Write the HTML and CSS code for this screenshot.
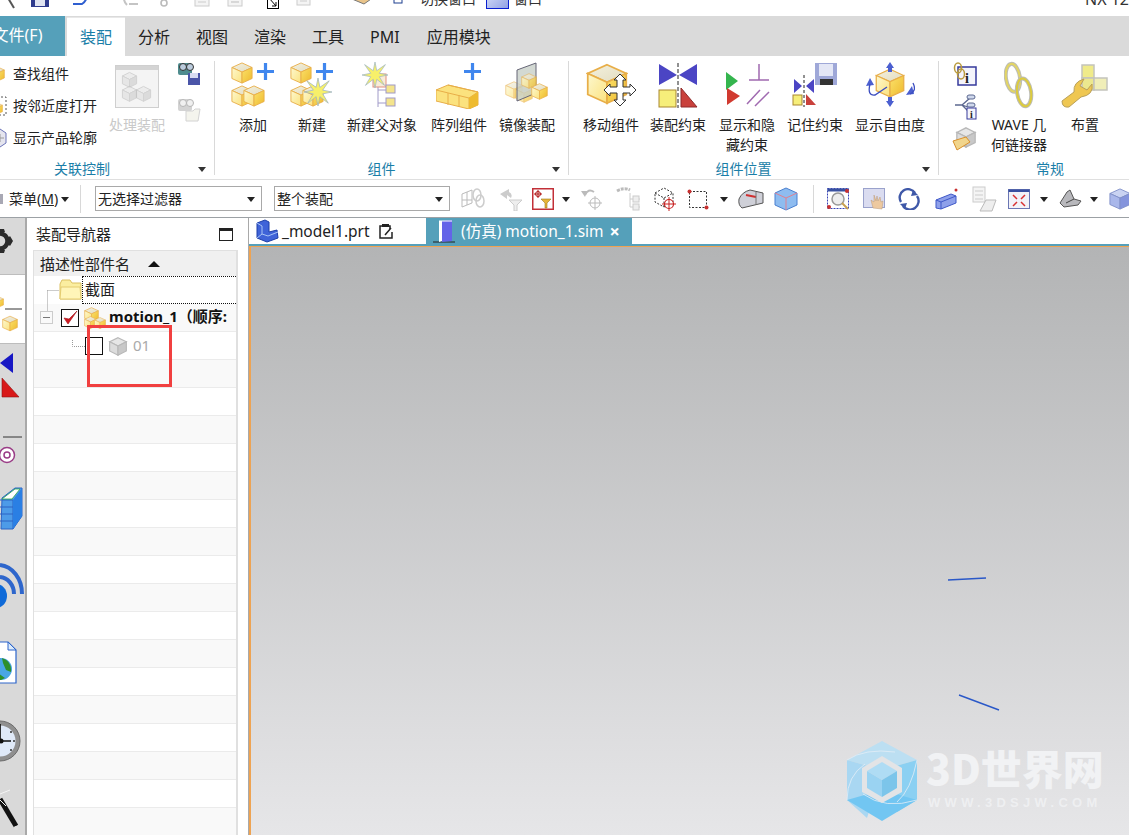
FILE: index.html
```html
<!DOCTYPE html>
<html lang="zh">
<head>
<meta charset="utf-8">
<title>NX 12</title>
<link rel="stylesheet" href="styles.css">
</head>
<body>
<svg class="defs" width="0" height="0" aria-hidden="true">
  <defs>
    <linearGradient id="gTop" x1="0" y1="0" x2="1" y2="1"><stop offset="0" stop-color="#f4f1de"/><stop offset="1" stop-color="#e2dcc0"/></linearGradient>
    <linearGradient id="gLeft" x1="0" y1="0" x2="1" y2="1"><stop offset="0" stop-color="#fdf8cf"/><stop offset="1" stop-color="#fbe27e"/></linearGradient>
    <linearGradient id="gRight" x1="0" y1="0" x2="1" y2="1"><stop offset="0" stop-color="#fbe26b"/><stop offset="1" stop-color="#eeb92e"/></linearGradient>
    <linearGradient id="gBlue" x1="0" y1="0" x2="1" y2="1"><stop offset="0" stop-color="#dfe6fa"/><stop offset="1" stop-color="#8f9fe4"/></linearGradient>
    <symbol id="cube" viewBox="0 0 24 24">
      <path d="M12 1 23 6 12 11 1 6Z" fill="url(#gTop)" stroke="#e8ae48"/>
      <path d="M1 6 12 11V23L1 18Z" fill="url(#gLeft)" stroke="#e8ae48"/>
      <path d="M23 6 12 11V23L23 18Z" fill="url(#gRight)" stroke="#e8ae48"/>
    </symbol>
    <symbol id="gcube" viewBox="0 0 24 24">
      <path d="M12 2 22 7 12 12 2 7Z" fill="#e6e6e6" stroke="#b8b8b8" stroke-width="1.4"/>
      <path d="M2 7 12 12V23L2 18Z" fill="#dcdcdc" stroke="#b8b8b8" stroke-width="1.4"/>
      <path d="M22 7 12 12V23L22 18Z" fill="#c8c8c8" stroke="#b8b8b8" stroke-width="1.4"/>
    </symbol>
    <symbol id="bcube" viewBox="0 0 24 24">
      <path d="M12 1 23 6 12 11 1 6Z" fill="#c9d3f2" stroke="#7f8fc8"/>
      <path d="M1 6 12 11V23L1 18Z" fill="#a9b7ea" stroke="#7f8fc8"/>
      <path d="M23 6 12 11V23L23 18Z" fill="#8494dc" stroke="#7f8fc8"/>
    </symbol>
    <symbol id="plus" viewBox="0 0 18 18"><path d="M9 0V18M0 9H18" stroke="#3f86ee" stroke-width="3.4"/></symbol>
    <symbol id="star" viewBox="0 0 30 30">
      <path d="M15 0 17 10 27 3 20 13 30 15 20 17 26 27 17 20 15 30 13 20 4 27 10 17 0 15 10 13 3 3 13 10Z" fill="#f7f06a" stroke="#9db4c4" stroke-width=".8"/>
    </symbol>
  </defs>
</svg>

<div class="quick">
  <div class="quick-row">
    <svg class="q q1" width="9" height="20"><path d="M1 9 7 19" stroke="#555" stroke-width="2"/></svg>
    <svg class="q q2" width="20" height="20"><rect x="1" y="0" width="18" height="18" fill="#2e3a8c"/><rect x="5" y="11" width="10" height="6" fill="#dfe3f0"/></svg>
    <svg class="q q3" width="20" height="20"><path d="M2 15H11Q16 12 17 3" fill="none" stroke="#2f5fd0" stroke-width="2"/></svg>
    <svg class="q q4" width="20" height="20"><path d="M6 4Q3 11 8 16M10 15H19" fill="none" stroke="#c4c4c4" stroke-width="2"/></svg>
    <svg class="q q5" width="16" height="20"><circle cx="8" cy="14" r="3" fill="none" stroke="#bbb" stroke-width="1.6"/><path d="M2 3 8 12 14 3" fill="none" stroke="#ccc"/></svg>
    <svg class="q q6" width="24" height="20"><rect x="8" y="0" width="14" height="17" fill="#f4f4f4" stroke="#ccc"/><path d="M11 10H19M11 13H19" stroke="#ccc"/></svg>
    <svg class="q q7" width="22" height="20"><rect x="6" y="0" width="14" height="17" fill="#f4f4f4" stroke="#ccc"/><path d="M9 10H17M9 13H17" stroke="#bbb"/></svg>
    <svg class="q q8" width="22" height="20"><circle cx="7" cy="4" r="6" fill="none" stroke="#d02020" stroke-width="1.6"/><rect x="10.500" y="6.500" width="11" height="13" fill="#fff" stroke="#000"/><path d="M12 9 19 17M15 17H19V13" fill="none" stroke="#000"/></svg>
    <svg class="q q9" width="24" height="20"><rect x="8" y="0" width="13" height="16" fill="#f4f4f4" stroke="#ccc"/><path d="M11 8H18M11 12H18" stroke="#ccc"/></svg>
    <svg class="q q10" width="26" height="20"><path d="M2 10 14 15 24 8 18 4 6 4Z" fill="#e9c48a" stroke="#777"/></svg>
    <svg class="q q11" width="10" height="20"><rect x="1" y="6" width="8" height="8" fill="#fff" stroke="#1c3f8f"/></svg>
    <span class="quick-text quick-switch">切换窗口</span>
    <svg class="q q12" width="23" height="20"><rect x=".5" y=".5" width="22" height="19" fill="url(#gBlue)" stroke="#0a1fd0"/></svg>
    <span class="quick-text quick-win">窗口</span>
    <span class="quick-text quick-nx">NX 12</span>
  </div>
</div>

<nav class="tabs">
  <span class="file-tab">文件(F)</span>
  <span class="tab tab-on">装配</span>
  <span class="tab">分析</span>
  <span class="tab">视图</span>
  <span class="tab">渲染</span>
  <span class="tab">工具</span>
  <span class="tab">PMI</span>
  <span class="tab">应用模块</span>
</nav>

<section class="ribbon">
  <div class="group g1">
    <div class="g-body g1-body">
      <ul class="small-list">
        <li><svg class="sm-ic" width="22" height="20"><use href="#cube" x="-2" y="2" width="16" height="16"/></svg>查找组件</li>
        <li><svg class="sm-ic" width="22" height="20"><rect x="2" y="1" width="13" height="18" fill="none" stroke="#555" stroke-dasharray="2 2"/><use href="#cube" x="-1" y="6" width="13" height="13"/></svg>按邻近度打开</li>
        <li><svg class="sm-ic" width="22" height="20"><path d="M2 5 9 1 15 5V15L9 19 2 15Z" fill="#e5e5ee" stroke="#6a72b8"/><path d="M9 6V14M5 10H13" stroke="#999"/></svg>显示产品轮廓</li>
      </ul>
      <div class="rb rb-off rb-proc">
        <svg class="ic" width="44" height="44">
          <rect x=".5" y="1.500" width="43" height="42" fill="#f4f4f4" stroke="#cfcfcf"/>
          <rect x="1" y="2" width="42" height="4" fill="#d4d4d4"/>
          <use href="#gcube" x="6" y="7" width="17" height="17" opacity=".55"/>
          <use href="#gcube" x="6" y="21" width="17" height="17" opacity=".55"/>
          <use href="#gcube" x="20" y="21" width="17" height="17" opacity=".55"/>
        </svg>
        <span>处理装配</span>
      </div>
      <div class="side-icons">
        <svg width="24" height="26"><rect x="1" y="2" width="14" height="12" rx="2" fill="#4f8c8e"/><circle cx="6" cy="6" r="3.500" fill="#bcd" stroke="#333"/><circle cx="13" cy="6" r="3.500" fill="#bcd" stroke="#333"/><rect x="11" y="12" width="12" height="12" fill="#4a55a8"/><rect x="13" y="12" width="8" height="5" fill="#d8dcf2"/></svg>
        <svg width="24" height="26" class="faded"><rect x="1" y="2" width="14" height="12" rx="2" fill="#ccc"/><circle cx="6" cy="6" r="3.500" fill="#eee" stroke="#aaa"/><circle cx="13" cy="6" r="3.500" fill="#eee" stroke="#aaa"/><path d="M9 14H16L18 12H23L21 24H9Z" fill="#f3f3ea" stroke="#ccc"/></svg>
      </div>
    </div>
    <div class="g-foot"><span class="g-label">关联控制</span><i class="more"></i></div>
  </div>

  <div class="group g2">
    <div class="g-body big-grid g2-grid">
      <div class="rb">
        <svg class="ic" width="44" height="48">
          <use href="#cube" x="0" y="1" width="22" height="22"/><use href="#cube" x="0" y="24" width="22" height="22"/><use href="#cube" x="12" y="24" width="22" height="22"/>
          <use href="#plus" x="26" y="2" width="17" height="17"/>
        </svg>
        <span>添加</span>
      </div>
      <div class="rb">
        <svg class="ic" width="44" height="48">
          <use href="#cube" x="0" y="1" width="22" height="22"/><use href="#cube" x="0" y="24" width="22" height="22"/><use href="#cube" x="12" y="24" width="22" height="22"/>
          <use href="#star" x="14" y="17" width="28" height="28"/>
          <use href="#plus" x="26" y="2" width="17" height="17"/>
        </svg>
        <span>新建</span>
      </div>
      <div class="rb">
        <svg class="ic" width="44" height="48">
          <path d="M18 16V46M18 29H26M18 42H26" stroke="#a09ac8" fill="none"/>
          <rect x="13" y="13" width="13" height="13" fill="#f8ecd8" stroke="#e09080"/>
          <rect x="26" y="24" width="9" height="8" fill="#f4e48c" stroke="#a09ac8"/>
          <rect x="26" y="37" width="9" height="8" fill="#f4e48c" stroke="#a09ac8"/>
          <use href="#star" x="2" y="1" width="26" height="26"/>
        </svg>
        <span>新建父对象</span>
      </div>
      <div class="rb">
        <svg class="ic" width="46" height="48">
          <path d="M0 29 12 24 42 31 42 44 33 48 0 40Z" fill="#fbe27e" stroke="#e8ae48"/>
          <path d="M0 29 33 37V48M12 32V44M23 34V46M12 24 42 31 33 37" fill="none" stroke="#e8ae48"/>
          <path d="M33 37 42 31V44L33 48Z" fill="#eebb30"/>
          <use href="#plus" x="28" y="2" width="17" height="17"/>
        </svg>
        <span>阵列组件</span>
      </div>
      <div class="rb">
        <svg class="ic" width="44" height="48">
          <use href="#cube" x="0" y="20" width="18" height="18" opacity=".7"/>
          <use href="#cube" x="10" y="24" width="18" height="18" opacity=".7"/>
          <path d="M12 9 31 2V32L12 40Z" fill="#c4ccc4" fill-opacity=".75" stroke="#667"/>
          <use href="#cube" x="16" y="12" width="16" height="16" opacity=".8"/>
          <use href="#cube" x="26" y="22" width="17" height="17"/>
        </svg>
        <span>镜像装配</span>
      </div>
    </div>
    <div class="g-foot"><span class="g-label">组件</span><i class="more"></i></div>
  </div>

  <div class="group g3">
    <div class="g-body big-grid g3-grid">
      <div class="rb">
        <svg class="ic" width="50" height="48">
          <use href="#cube" x="0" y="0" width="42" height="46"/>
          <path d="M35 18 41 24H38V31H45V28L51 34 45 40V37H38V44H41L35 50 29 44H32V37H25V40L19 34 25 28V31H32V24H29Z" transform="translate(-1 -5)" fill="#fff" stroke="#333"/>
        </svg>
        <span>移动组件</span>
      </div>
      <div class="rb">
        <svg class="ic" width="42" height="48">
          <path d="M2 3 20 14 2 24Z M40 3 22 14 40 24Z" fill="#4b45c4"/>
          <path d="M21 2V47" stroke="#222" stroke-dasharray="4 2"/>
          <rect x="2" y="29" width="17" height="17" fill="#f6ee7a" stroke="#a98730"/>
          <path d="M24 27 40 46H24Z" fill="#c9413c" stroke="#8f2b2b"/>
        </svg>
        <span>装配约束</span>
      </div>
      <div class="rb">
        <svg class="ic" width="48" height="48">
          <path d="M3 11 15 20 3 29Z" fill="#34b54e"/>
          <path d="M4 27 17 35 4 44Z" fill="#d13a30"/>
          <path d="M26 19H46M36 3V19M24 43 37 29M32 45 46 31" stroke="#a06ab0" stroke-width="1.500" fill="none"/>
        </svg>
        <span>显示和隐<br>藏约束</span>
      </div>
      <div class="rb">
        <svg class="ic" width="46" height="48">
          <rect x="23" y="2" width="22" height="22" fill="#9fa8d8"/><rect x="27" y="3" width="14" height="12" fill="#e4e7f6"/><rect x="28" y="18" width="13" height="6" fill="#333"/>
          <path d="M2 18 10 25 2 32ZM22 18 14 25 22 32Z" fill="#4b45c4"/>
          <path d="M12 14V46" stroke="#222" stroke-dasharray="3 2"/>
          <rect x="1" y="34" width="9" height="10" fill="#f6ee7a" stroke="#a98730"/>
          <path d="M14 33 24 44H14Z" fill="#c9413c"/>
        </svg>
        <span>记住约束</span>
      </div>
      <div class="rb">
        <svg class="ic" width="50" height="48">
          <use href="#cube" x="10" y="7" width="30" height="30"/>
          <path d="M25 1 29 7H27V11H23V7H21Z M25 46 21 40H23V36H27V40H29Z" fill="#4b5fd0"/>
          <path d="M5 17 1 25 9 24Z M47 25 41 34 49 33Z" fill="#4b5fd0"/>
          <path d="M5 23Q2 35 10 34L22 26M48 22Q52 30 45 33" fill="none" stroke="#3c4ec0" stroke-width="1.300"/>
        </svg>
        <span>显示自由度</span>
      </div>
    </div>
    <div class="g-foot"><span class="g-label">组件位置</span><i class="more"></i></div>
  </div>

  <div class="group g4">
    <div class="g-body g4-body">
      <div class="g4-small">
        <svg width="26" height="26"><rect x="6" y="5" width="18" height="18" fill="#f4f4fb" stroke="#363a9c" stroke-width="1.500"/><text class="info" x="15" y="21">i</text><ellipse cx="6" cy="6" rx="3.500" ry="5" fill="none" stroke="#b99a3c" stroke-width="1.500"/><ellipse cx="9" cy="12" rx="3.500" ry="5" fill="none" stroke="#b99a3c" stroke-width="1.500"/></svg>
        <svg width="26" height="26"><path d="M3 11H10L18 4M10 11 16 13M10 11 18 19" fill="none" stroke="#5c6890" stroke-width="1.300"/><rect x="15" y="1" width="8" height="4" rx="2" fill="#cfd8ec" stroke="#5c6890"/><rect x="15" y="9" width="8" height="4" rx="2" fill="#cfd8ec" stroke="#5c6890"/><rect x="15" y="14" width="9" height="11" fill="#f4f4fb" stroke="#363a9c"/><text class="info info-s" x="19.500" y="24">i</text></svg>
        <svg width="26" height="26"><use href="#gcube" x="3" y="0" width="22" height="22"/><path d="M1 15 14 11 18 16 5 24Z" fill="#f1d58c" stroke="#d9902c"/></svg>
      </div>
      <div class="big-grid g4-grid">
        <div class="rb">
          <svg class="ic" width="30" height="48">
            <g fill="none" transform="rotate(-8 15 24)">
              <ellipse cx="10" cy="16" rx="7" ry="14" stroke="#bdbdb4" stroke-width="4"/>
              <ellipse cx="10" cy="16" rx="7" ry="14" stroke="#e3d564" stroke-width="2"/>
              <ellipse cx="19" cy="32" rx="7" ry="14" stroke="#bdbdb4" stroke-width="4"/>
              <ellipse cx="19" cy="32" rx="7" ry="14" stroke="#dccb3e" stroke-width="2"/>
            </g>
          </svg>
          <span>WAVE 几<br>何链接器</span>
        </div>
        <div class="rb">
          <svg class="ic" width="48" height="48">
            <rect x="21" y="4" width="12" height="13" fill="#f0eb8a" stroke="#c4c4bc" stroke-width="1.500"/>
            <rect x="21" y="17" width="12" height="12" fill="#ece88e" stroke="#c4c4bc" stroke-width="1.500"/>
            <rect x="33" y="17" width="13" height="12" fill="#f0eeb8" stroke="#c4c4bc" stroke-width="1.500"/>
            <path d="M1 40 13 31Q12 21 23 18L19 25 26 29 31 23Q33 34 20 36L8 46Q1 47 1 40Z" fill="#efc752" stroke="#b9a05a"/>
          </svg>
          <span>布置</span>
        </div>
      </div>
    </div>
    <div class="g-foot g4-foot"><span class="g-label">常规</span></div>
  </div>
</section>

<section class="toolbar">
  <div class="tb-menu">
    <svg width="9" height="18"><rect x="-4" y="4" width="7" height="10" fill="#a8a8b4"/></svg>
    <span>菜单(<u>M</u>)</span>
    <i class="more more-dark"></i>
  </div>
  <div class="select sel1"><span>无选择过滤器</span><i class="more more-dark"></i></div>
  <div class="select sel2"><span>整个装配</span><i class="more more-dark"></i></div>
  <div class="tb-grid">
    <svg class="off" width="26" height="24"><path d="M2 7 12 3V16L2 20ZM2 13H12M7 5V18" fill="none" stroke="#bbb"/><ellipse cx="17" cy="8" rx="4" ry="6" fill="none" stroke="#ccc" stroke-width="1.500"/><ellipse cx="20" cy="14" rx="4" ry="6" fill="none" stroke="#ccc" stroke-width="1.500"/></svg>
    <svg class="off" width="24" height="24"><path d="M1 7 10 2V5Q14 7 12 11L8 8V12Z" fill="#ccc"/><path d="M10 13H23L18 18V24H15V18Z" fill="#eee" stroke="#ccc"/></svg>
    <svg width="22" height="22"><rect x=".75" y=".75" width="20.500" height="20.500" fill="#fff" stroke="#c23038" stroke-width="1.500"/><path d="M6 2V10M2 6H10" stroke="#b01818"/><circle cx="6" cy="6" r="2.500" fill="none" stroke="#b01818"/><path d="M9 11H19L15 15V20H13V15Z" fill="#e6b63a" stroke="#a07a20" stroke-width=".6"/></svg>
    <i class="more more-dark"></i>
    <svg class="off" width="24" height="24"><path d="M5 8Q8 1 14 5" fill="none" stroke="#bbb" stroke-width="2"/><path d="M1 4 7 4 5 10Z" fill="#bbb"/><circle cx="15" cy="16" r="5" fill="none" stroke="#bbb"/><path d="M15 9V23M8 16H22" stroke="#bbb"/></svg>
    <svg class="off" width="26" height="24"><path d="M1 4Q8 0 14 3" stroke="#bbb" stroke-width="3" fill="none" stroke-dasharray="3 1"/><path d="M14 6V20M14 12H24M14 20H24" stroke="#ccc"/><rect x="17" y="9" width="6" height="6" fill="#eee" stroke="#ccc"/><rect x="17" y="17" width="6" height="6" fill="#eee" stroke="#ccc"/></svg>
    <svg width="24" height="24"><path d="M2 6 11 1 20 6V15L11 20 2 15ZM2 6 11 11 20 6M11 11V20" fill="none" stroke="#333" stroke-dasharray="2 1.500"/><circle cx="16" cy="17" r="4.500" fill="#fff" stroke="#c82020" stroke-width="1.200"/><path d="M16 10V24M9 17H23" stroke="#c82020"/></svg>
    <svg width="22" height="22"><rect x="2.500" y="3.500" width="17" height="16" fill="none" stroke="#333" stroke-dasharray="2 1.500"/><circle cx="2.500" cy="3.500" r="2" fill="#c83030"/><circle cx="19.500" cy="19.500" r="2" fill="#c83030"/></svg>
    <i class="more more-dark"></i>
    <svg width="26" height="22"><path d="M1 11Q4 4 12 2L25 5V15L4 20Q0 17 1 11Z" fill="#cfd0d8" stroke="#555"/><path d="M8 7 18 9" stroke="#d03030" stroke-width="2"/><path d="M18 4V17" stroke="#777"/></svg>
    <svg width="24" height="24"><path d="M12 1 23 6V18L12 23 1 18V6Z" fill="#8ebcf0" stroke="#4a80d0"/><path d="M1 6 12 11 23 6M12 11V23" fill="none" stroke="#e08090"/></svg>
    <i class="tb-sep"></i>
    <svg width="24" height="22"><rect x=".5" y=".5" width="21" height="20" fill="#fff" stroke="#3844b8" stroke-dasharray="2 1"/><rect x=".5" y=".5" width="21" height="3" fill="#3850a0"/><circle cx="11" cy="11" r="6" fill="#eee" stroke="#999" stroke-width="1.500"/><path d="M15 15 21 21" stroke="#c9a050" stroke-width="2"/><circle cx="20" cy="3" r="2" fill="#c83030"/><circle cx="2" cy="19" r="2" fill="#c83030"/></svg>
    <svg width="24" height="22"><rect x=".5" y=".5" width="21" height="19" fill="#dadcf0" stroke="#9aa2cc"/><path d="M10 20 8 12 11 14V7L13 13 14 8 15 13 17 9 18 14 20 13 19 21Z" fill="#edc9a0" stroke="#b89878" stroke-width=".5"/></svg>
    <svg width="24" height="22"><path d="M4 14A8 8 0 0 1 18 5M20 8A8 8 0 0 1 6 18" fill="none" stroke="#3f58a8" stroke-width="2.400"/><path d="M16 2 21 7 14 8ZM8 21 3 16 10 15Z" fill="#3f58a8"/></svg>
    <svg width="24" height="22"><path d="M1 12 16 6 21 8V15L6 21 1 20Z" fill="#8ea0ea" stroke="#3f58c8"/><path d="M1 12 6 14V21M6 14 21 8" fill="none" stroke="#3f58c8"/><circle cx="21" cy="2" r="1.500" fill="#c83030"/></svg>
    <svg class="off" width="26" height="26"><rect x="1" y="1" width="12" height="15" fill="#f4f4f4" stroke="#ccc"/><path d="M3 5H11M3 9H11M3 13H11" stroke="#ccc"/><path d="M8 25 14 14H24L20 25Z" fill="#eee" stroke="#bbb"/></svg>
    <svg width="22" height="20"><rect x=".5" y=".5" width="21" height="19" fill="#f2f2f8" stroke="#6a76b4"/><rect x=".5" y=".5" width="21" height="2.500" fill="#3850a0"/><path d="M5 6 9 10M17 6 13 10M5 17 9 13M17 17 13 13" stroke="#d83030" stroke-width="1.500"/></svg>
    <i class="more more-dark"></i>
    <svg width="24" height="20"><path d="M2 14 9 3 12 1 16 10 23 12 20 16 6 18Z" fill="#b8b8bc" stroke="#555"/><path d="M8 14 16 10" stroke="#444"/></svg>
    <i class="more more-dark"></i>
    <svg width="24" height="24"><use href="#bcube" x="1" y="1" width="22" height="22"/></svg>
  </div>
</section>

<main class="main">
  <aside class="strip">
    <div class="strip-top">
      <svg width="25" height="57"><circle cx="0" cy="23" r="7.500" fill="none" stroke="#2b2b2b" stroke-width="4.500"/><path d="M-1 11H4L5 14H-1ZM10 18 13 23 10 28 7 25V21ZM-1 35H4L5 32H-1Z" fill="#2b2b2b"/></svg>
    </div>
    <div class="strip-mid">
      <svg width="25" height="68"><use href="#cube" x="-8" y="20" width="12" height="14"/><path d="M5 34H22" stroke="#333"/><use href="#cube" x="2" y="40" width="16" height="17"/></svg>
    </div>
    <div class="strip-low">
      <svg width="25" height="492">
        <path d="M0 19 13 9V29Z" fill="#1717c4"/><path d="M2 34 19 53H2Z" fill="#d81818" stroke="#8f1515" stroke-width=".6"/>
        <path d="M3 93H22" stroke="#333"/>
        <circle cx="7" cy="111" r="7.500" fill="#fff" stroke="#9a3d87" stroke-width="1.500"/><circle cx="7" cy="111" r="3" fill="none" stroke="#9a3d87" stroke-width="1.500"/>
        <path d="M2 154 15 144H22V172L13 185H1Z" fill="#4d9be8" stroke="#2c63c4"/><path d="M0 156H13V185M0 163H13M0 170H13M0 177H13" fill="none" stroke="#2c63c4"/><path d="M2 155 15 145 20 145 12 155Z" fill="#fff" stroke="#2ea84a" stroke-width=".8"/><path d="M13 156 22 144V172L13 185Z" fill="#2a7fe4"/>
        <path d="M0 221A24 29 0 0 1 22 250" fill="none" stroke="#2e66cc" stroke-width="4"/><path d="M0 233A15 17 0 0 1 14 250" fill="none" stroke="#2e66cc" stroke-width="4"/><ellipse cx="-4" cy="252" rx="11" ry="12" fill="#0f6ad8"/>
        <path d="M-1 298H8L16 306V339H-1Z" fill="#fff" stroke="#2e66cc" stroke-width="1.200"/><path d="M8 298V306H16Z" fill="#dcebfa" stroke="#2e66cc"/><circle cx="1" cy="325" r="11" fill="#4aa6e4"/><path d="M2 314Q12 317 11 328L6 326 3 319Z M-2 329 5 334 1 336H-3Z" fill="#2e8f2a"/>
        <circle cx="0" cy="397" r="20" fill="#8f8f8f" stroke="#6c6c6c"/><circle cx="0" cy="397" r="15.500" fill="#dfe9f8"/><path d="M0 380V397H11" fill="none" stroke="#111" stroke-width="1.700"/><circle cx="1" cy="397" r="2.500" fill="#111"/><circle cx="14" cy="397" r="1" fill="#333"/><circle cx="11" cy="388" r="1" fill="#333"/><circle cx="11" cy="406" r="1" fill="#333"/>
        <path d="M0 455 16 482" stroke="#111" stroke-width="5"/><circle cx="16" cy="484" r="2" fill="#ddd"/><path d="M0 450 10 446M0 456 6 462" stroke="#f4f4f4"/>
      </svg>
    </div>
  </aside>

  <section class="nav-panel">
    <header class="nav-head"><span>装配导航器</span><i class="maxi"></i></header>
    <div class="tree">
      <div class="tree-head"><span>描述性部件名</span><i class="sort-up"></i></div>
      <svg class="tree-lines" width="70" height="90"><path d="M13.500 14.500H25M13.500 14.500V35M38.500 64V70.500H52" fill="none" stroke="#999" stroke-dasharray="1 1"/></svg>
      <div class="row row-even row-section">
        <svg class="folder" width="24" height="22"><path d="M1 5 3 1H11L13 4H22V20H1Z" fill="#fbeea0" stroke="#dcc060"/><path d="M2 8H21L22 20H1Z" fill="#fff5b8" stroke="#e4cc70"/></svg>
        <span class="focus-cell">截面</span>
      </div>
      <div class="row row-odd row-motion">
        <i class="minus"></i>
        <svg class="chk" width="18" height="18"><rect x=".5" y=".5" width="17" height="17" fill="#fff" stroke="#111"/><path d="M3 9 7 15 16 2 8 10Z" fill="#d01820" stroke="#a01018" stroke-width=".6"/></svg>
        <svg class="mc" width="22" height="22"><use href="#cube" x="0" y="0" width="15" height="15"/><use href="#cube" x="0" y="9" width="13" height="13"/><use href="#cube" x="10" y="10" width="12" height="12"/></svg>
        <b class="motion-name">motion_1（顺序:</b>
      </div>
      <div class="row row-even row-01">
        <i class="chk-empty"></i>
        <svg class="cube-01" width="20" height="20"><use href="#gcube" x="0" y="0" width="20" height="20"/></svg>
        <span class="grey-name">01</span>
      </div>
      <div class="row row-odd"></div><div class="row row-even"></div>
      <div class="row row-odd"></div><div class="row row-even"></div>
      <div class="row row-odd"></div><div class="row row-even"></div>
      <div class="row row-odd"></div><div class="row row-even"></div>
      <div class="row row-odd"></div><div class="row row-even"></div>
      <div class="row row-odd"></div><div class="row row-even"></div>
      <div class="row row-odd"></div><div class="row row-even"></div>
      <div class="row row-odd"></div><div class="row row-even"></div>
      <div class="row row-odd"></div><div class="row row-even"></div>
      <div class="row row-odd"></div><div class="row row-even"></div>
    </div>
    <i class="red-box"></i>
  </section>

  <section class="work">
    <div class="doc-tabs">
      <div class="doc doc-plain">
        <svg width="24" height="24"><path d="M1 4 9 1 13 3V13L21 11 22 19 11 23 1 19Z" fill="#3f63d8" stroke="#1d3fa8"/><path d="M1 4 6 7V15L12 17 22 13M6 15 1 19" fill="none" stroke="#a8c4f4"/></svg>
        <span>_model1.prt</span>
        <svg class="clip" width="14" height="16"><path d="M3 3H1V15H13V9M10 3H11V6" fill="none" stroke="#222" stroke-width="1.500"/><rect x="3" y="1" width="7" height="3" fill="#222"/><path d="M6 12 12 5" stroke="#222" stroke-width="1.500"/></svg>
      </div>
      <div class="doc doc-on">
        <svg width="24" height="24"><path d="M1 23H23" stroke="#222"/><path d="M7 2H10V22L7 23Z" fill="#fff"/><path d="M10 2 20 1V22L10 23Z" fill="#6464e8"/><path d="M7 2H20" stroke="#fff"/></svg>
        <span>(仿真) motion_1.sim</span>
        <b class="close">×</b>
      </div>
    </div>
    <div class="viewport">
      <svg class="model-lines" width="60" height="140"><path d="M1 7 39 5M12 122 52 137" stroke="#2a58c8" stroke-width="1.400"/></svg>
      <div class="mark">
        <svg class="mark-logo" width="74" height="82" viewBox="0 0 74 82">
          <path d="M37 1 72 20 37 30 2 20Z" fill="#bcdff2"/>
          <path d="M2 20 37 30 22 78 2 60Z" fill="#a9d7f2"/>
          <path d="M72 20V60L52 72 37 30Z" fill="#8bd0f2"/>
          <path d="M2 60 37 50 72 60 37 81Z" fill="#72c6f2"/>
          <path d="M2 20Q20 8 50 12M72 20Q66 50 52 62M72 60Q40 70 18 54M2 60Q2 36 20 24" fill="none" stroke="#e3eef6" stroke-width=".8"/>
          <path d="M37 16 57 28V52L37 63 17 52V28Z" fill="#e3e4e6"/>
          <path d="M37 22 52 31 37 40 22 31Z" fill="#afdcf4"/><path d="M22 31 37 40V57L22 48Z" fill="#9ad3f2"/><path d="M52 31 37 40V57L52 48Z" fill="#7cc5ea"/>
        </svg>
        <div class="mark-text">
          <strong>3D世界网</strong>
          <small>WWW.3DSJW.COM</small>
        </div>
      </div>
    </div>
  </section>
</main>
</body>
</html>
```

FILE: styles.css
```css
* { box-sizing: border-box; }
html, body { margin: 0; padding: 0; height: 835px; width: 1129px; overflow: hidden; background: #fff; }
body { font: 14px/20px "Noto Sans", "Noto Sans CJK SC", sans-serif; color: #222; display: flex; flex-direction: column; }
.defs { position: absolute; }
i { font-style: normal; display: block; }
svg { display: block; flex: none; overflow: hidden; }

/* quick access */
.quick { height: 16px; flex: none; overflow: hidden; background: #fff; }
.quick-row { height: 20px; margin-top: -11px; position: relative; display: flex; align-items: flex-start; padding-left: 7px; }
.quick-text { line-height: 20px; font-size: 14px; color: #333; }
.q2 { margin-left: 14px; } .q3 { margin-left: 21px; } .q4 { margin-left: 28px; }
.q5 { margin-left: 17px; } .q6 { margin-left: 15px; } .q7 { margin-left: 11px; }
.q8 { margin-left: 13px; } .q9 { margin-left: 10px; } .q10 { margin-left: 37px; }
.q11 { margin-left: 17px; }
.quick-switch { margin-left: 17px; }
.q12 { margin-left: 10px; }
.quick-win { margin-left: 5px; }
.quick-nx { margin-left: auto; margin-right: 0; font-size: 16px; }

/* tabs */
.tabs { height: 40px; flex: none; background: #dadada; display: flex; align-items: stretch; margin-left: -30px; font-size: 16px; line-height: 40px; padding-top: 1px; color: #222; }
.file-tab { width: 95px; margin-top: -1px; line-height: 39px; background: #55a0ba; color: #fff; text-align: center; margin-right: 2px; }
.tab { padding: 0 13px; }
.tab:last-child { margin-left: 1px; }
.tab-on { background: #fff; color: #1a7ea8; border-top: 1px solid #e8e8e8; line-height: 38px; }

/* ribbon */
.ribbon { height: 124px; flex: none; margin-left: -30px; padding-top: 5px; display: flex; align-items: flex-start; background: #fff; border-bottom: 1px solid #dfdfdf; font-size: 14px; }
.group { height: 114px; display: flex; flex-direction: column; flex: none; border-right: 1px solid #d9d9d9; }
.g1 { width: 245px; } .g2 { width: 354px; } .g3 { width: 370px; } .g4 { width: 222px; border-right: 0; }
.g-body { height: 100px; flex: none; }
.g-foot { height: 16px; display: flex; align-items: center; line-height: 16px; }
.g-label { flex: 1; text-align: center; color: #1a7ea8; }
.more { width: 20px; height: 16px; position: relative; }
.more::after { content: ""; position: absolute; left: 4px; top: 6px; border: 4px solid transparent; border-top: 5px solid #333; border-bottom: 0; }

.g1-body { display: flex; padding-left: 30px; position: relative; }
.small-list { list-style: none; margin: -3px 0 0 0; padding: 0; width: 109px; flex: none; }
.small-list li { height: 32px; display: flex; align-items: center; margin-left: -9px; white-space: nowrap; }
.rb-proc { width: 56px; }
.side-icons { margin-left: 12px; display: flex; flex-direction: column; gap: 10px; }
.faded { opacity: .85; }

.big-grid { display: grid; }
.g2-grid { grid-template-columns: 76px 42px 98px 56px 80px; }
.g3-grid { grid-template-columns: 84px 50px 88px 48px 102px; }
.g4-grid { grid-template-columns: 66px 66px; }
.rb { display: flex; flex-direction: column; align-items: center; text-align: center; line-height: 20px; white-space: nowrap; }
.rb .ic { height: 48px; margin-bottom: 6px; }
.rb-off { color: #c9c9c9; }
.g1 .rb-off .ic { margin: 3px 0 7px; height: 44px; }

.g4-body { display: flex; padding-left: 13px; }
.g4-small { width: 34px; display: flex; flex-direction: column; gap: 6px; padding-top: 1px; }
.info { font: bold 14px "Liberation Serif", serif; fill: #222; text-anchor: middle; }
.info-s { font-size: 10px; }

/* toolbar */
.toolbar { height: 37px; flex: none; display: flex; align-items: center; background: #fff; font-size: 14px; position: relative; }
.tb-menu { width: 81px; height: 28px; display: flex; align-items: center; border-right: 1px solid #d8d8d8; flex: none; }
.tb-menu span { white-space: nowrap; }
.more-dark { width: 14px; height: 12px; }
.more-dark::after { left: 3px; top: 4px; border-top-color: #222; }
.select { height: 25px; border: 1px solid #a9a9a9; display: flex; align-items: center; padding-left: 2px; justify-content: space-between; flex: none; white-space: nowrap; }
.select .more-dark { margin-right: 3px; }
.sel1 { width: 167px; margin-left: 14px; }
.sel2 { width: 176px; margin-left: 12px; }
.tb-grid { display: grid; align-items: center; justify-items: center; margin-left: 5px; flex: none;
  grid-template-columns: 36px 40px 24px 22px 30px 44px 28px 38px 14px 40px 30px 24px 28px 44px 24px 52px 24px 44px 6px 46px 2px 50px; }
.tb-sep { width: 1px; height: 28px; background: #d8d8d8; }

/* main */
.main { flex: 1; min-height: 0; display: flex; border-top: 1px solid #9ca1a5; }
.strip { width: 27px; flex: none; display: flex; flex-direction: column; border-right: 2px solid #a9a9a9; }
.strip-top { height: 57px; background: #d9d9d9; border-bottom: 1px solid #bdbdbd; flex: none; }
.strip-mid { height: 68px; background: #fff; flex: none; }
.strip-low { flex: 1; background: #d9d9d9; border-top: 1px solid #bdbdbd; }

.nav-panel { width: 222px; flex: none; padding: 0 10px 0 6px; background: #fff; position: relative; border-right: 1px solid #a9a9a9; font-size: 15px; }
.nav-head { height: 32px; display: flex; align-items: center; justify-content: space-between; padding: 0 5px 0 3px; }
.maxi { width: 14px; height: 13px; border: 1px solid #222; border-top-width: 3px; margin-top: 1px; }
.tree { position: relative; height: 600px; border: 1px solid #e0e0e0; border-right-width: 2px; overflow: hidden; }
.tree-head { height: 25px; background: #f0f0f0; display: flex; align-items: center; padding-left: 6px; }
.sort-up { width: 0; height: 0; margin-left: 18px; border: 6px solid transparent; border-bottom: 6px solid #111; border-top: 0; }
.tree-lines { position: absolute; left: 0; top: 25px; }
.row { height: 28px; display: flex; align-items: center; border-bottom: 1px solid #ebebeb; }
.row-odd { background: #f9f9f9; }
.row-even { background: #fff; }
.row-section { padding-left: 25px; border-bottom: 0; }
.folder { margin-right: -1px; }
.focus-cell { flex: 1; height: 28px; line-height: 25px; padding-left: 2px; border-top: 1px dotted #111; border-left: 1px dotted #111; border-bottom: 1px dotted #111; }
.row-motion { padding-left: 6px; }
.minus { width: 13px; height: 13px; border: 1px solid #ccc; background: linear-gradient(#777, #777) center / 7px 1px no-repeat; margin-right: 8px; }
.mc { margin-left: 5px; }
.motion-name { margin-left: 3px; margin-top: -3px; font-weight: 700; white-space: nowrap; color: #111; }
.row-01 { padding-left: 51px; }
.chk-empty { width: 18px; height: 18px; border: 1px solid #111; }
.cube-01 { margin-left: 5px; }
.grey-name { margin-left: 5px; margin-top: -2px; color: #aaa; }
.red-box { position: absolute; left: 60px; top: 107px; width: 85px; height: 62px; border: 3px solid #f14040; }

.work { flex: 1; min-width: 0; display: flex; flex-direction: column; }
.doc-tabs { height: 28px; flex: none; display: flex; background: #fff; border-bottom: 2px solid #55a0ba; font-size: 15.5px; }
.doc { height: 26px; display: flex; align-items: center; flex: none; }
.doc-plain { width: 177px; padding-left: 7px; color: #222; }
.doc-plain span { margin-left: 2px; }
.clip { margin-left: 9px; }
.doc-on { width: 206px; background: #55a0ba; color: #fff; padding-left: 6px; }
.doc-on span { margin-left: 5px; white-space: nowrap; }
.close { margin-left: 6px; font-size: 18px; line-height: 20px; }
.viewport { flex: 1; position: relative; overflow: hidden; border-top: 1px solid #eea352; border-left: 2px solid #eea352; background: linear-gradient(#b3b4b5, #e6e6e8); }
.model-lines { position: absolute; left: 696px; top: 326px; }
.mark { position: absolute; left: 594px; top: 493px; display: flex; gap: 7px; }
.mark-text { display: flex; flex-direction: column; color: #f1f2f4; padding-top: 4px; }
.mark-text strong { font: 900 41px/46px "Noto Sans CJK SC", "Noto Sans", sans-serif; white-space: nowrap; }
.mark-text small { font: 700 13px/14px "Liberation Sans", sans-serif; letter-spacing: 4.3px; margin-top: 6px; padding-left: 2px; white-space: nowrap; opacity: .85; }
```
